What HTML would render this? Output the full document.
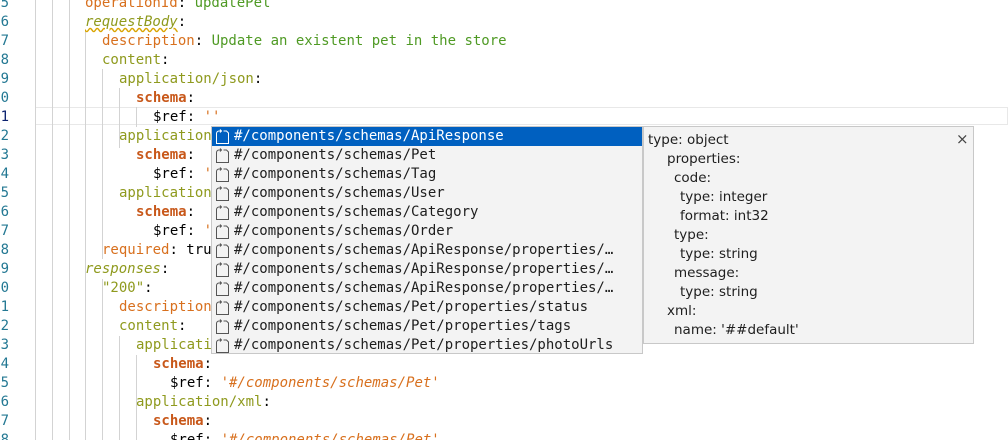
<!DOCTYPE html>
<html><head><style>
html,body{margin:0;padding:0;width:1008px;height:440px;overflow:hidden;background:#fff;position:relative}
.m{font-family:"DejaVu Sans Mono","Liberation Mono",monospace;font-size:14px}
.ln{position:absolute;left:-3px;width:12px;text-align:right;color:#237893;line-height:19px}
.cl{position:absolute;white-space:pre;line-height:19px}
.g{position:absolute;width:1px;background:#d3d3d3}
.k{color:#8f9a1e}.o{color:#d8701e}.b{color:#c8581a;font-weight:bold}.v{color:#4f9a24}.s{color:#d8701e}.i{font-style:italic}
.pop{position:absolute;left:211px;top:126px;width:432px;height:228px;background:#f3f3f3;border:1px solid #c8c8c8;box-sizing:border-box}
.row{height:19px;line-height:19px;white-space:pre;color:#1e1e1e;position:relative;padding-left:22px}
.row svg{position:absolute;left:2px;top:1px}
.sel{background:#0060c0;color:#fff}
.det{position:absolute;left:643px;top:126px;width:331px;height:218px;background:#f3f3f3;border:1px solid #c8c8c8;box-sizing:border-box;font-family:"DejaVu Sans","Liberation Sans",sans-serif;font-size:13.5px;color:#1e1e1e}
.det div{position:absolute;white-space:pre;line-height:19px}
</style></head><body class="m">
<div style="position:absolute;left:35px;top:107px;width:973px;height:18px;border:1px solid #e8e8e8;box-sizing:border-box"></div>
<div class="g" style="left:35px;top:0;height:440px"></div>
<div class="g" style="left:52px;top:0;height:440px"></div>
<div class="g" style="left:69px;top:0;height:440px"></div>
<div class="g" style="left:85px;top:30px;height:410px"></div>
<div class="g" style="left:102px;top:69px;height:190px"></div>
<div class="g" style="left:119px;top:88px;height:60px"></div>
<div class="g" style="left:136px;top:107px;height:20px"></div>
<div class="g" style="left:102px;top:279px;height:161px"></div>
<div class="g" style="left:119px;top:336px;height:104px"></div>
<div class="g" style="left:136px;top:355px;height:85px"></div>
<div style="position:absolute;left:0;top:2px;width:1008px;height:440px">
<div class="cl" style="left:85px;top:-8px"><span class="o">operationId</span>: <span class="v">updatePel</span></div>
<div class="cl" style="left:85px;top:11px"><span class="k i" style="text-decoration:underline wavy #d9a400">requestBody</span>:</div>
<div class="cl" style="left:102px;top:30px"><span class="o">description</span>: <span class="v">Update an existent pet in the store</span></div>
<div class="cl" style="left:102px;top:49px"><span class="k">content</span>:</div>
<div class="cl" style="left:119px;top:68px"><span class="k">application/json</span>:</div>
<div class="cl" style="left:136px;top:87px"><span class="b">schema</span>:</div>
<div class="cl" style="left:153px;top:106px">$ref: <span class="s">''</span></div>
<div class="cl" style="left:119px;top:125px"><span class="k">application/xml</span>:</div>
<div class="cl" style="left:136px;top:144px"><span class="b">schema</span>:</div>
<div class="cl" style="left:153px;top:163px">$ref: <span class="s">'</span></div>
<div class="cl" style="left:119px;top:182px"><span class="k">application/x-www</span>:</div>
<div class="cl" style="left:136px;top:201px"><span class="b">schema</span>:</div>
<div class="cl" style="left:153px;top:220px">$ref: <span class="s">'</span></div>
<div class="cl" style="left:102px;top:239px"><span class="o">required</span>: true</div>
<div class="cl" style="left:85px;top:258px"><span class="k i">responses</span>:</div>
<div class="cl" style="left:102px;top:277px"><span class="k">"200"</span>:</div>
<div class="cl" style="left:119px;top:296px"><span class="o">description</span>:</div>
<div class="cl" style="left:119px;top:315px"><span class="k">content</span>:</div>
<div class="cl" style="left:136px;top:334px"><span class="k">application/json</span>:</div>
<div class="cl" style="left:153px;top:353px"><span class="b">schema</span>:</div>
<div class="cl" style="left:170px;top:372px">$ref: <span class="s i">'#/components/schemas/Pet'</span></div>
<div class="cl" style="left:136px;top:391px"><span class="k">application/xml</span>:</div>
<div class="cl" style="left:153px;top:410px"><span class="b">schema</span>:</div>
<div class="cl" style="left:170px;top:429px">$ref: <span class="s i">'#/components/schemas/Pet'</span></div>
<div class="ln" style="top:-8px">5<br>6<br>7<br>8<br>9<br>0<br><span style="color:#0b216f">1</span><br>2<br>3<br>4<br>5<br>6<br>7<br>8<br>9<br>0<br>1<br>2<br>3<br>4<br>5<br>6<br>7<br>8</div>
</div>

<div class="pop" id="pop"></div>
<script>
var items=["ApiResponse","Pet","Tag","User","Category","Order","ApiResponse/properties/…","ApiResponse/properties/…","ApiResponse/properties/…","Pet/properties/status","Pet/properties/tags","Pet/properties/photoUrls"];
var h="";
items.forEach(function(t,i){var c=i==0?"#fff":"#555";
h+='<div class="row'+(i==0?' sel':'')+'"><svg width="17" height="17" viewBox="0 0 17 17" fill="none" stroke="'+c+'" stroke-width="1"><path d="M2.5 7.5v8h12v-10.5l-2-2h-3"/><path d="M2.5 7.5v-2a2.5 2.5 0 0 1 2.5-2.5h2.5"/><path d="M6 1.5l1.5 1.5-1.5 1.5"/></svg>#/components/schemas/'+t+'</div>';});
document.getElementById("pop").innerHTML=h;
</script>

<div class="det">
<div style="left:4px;top:4px">type: object</div>
<div style="left:312px;top:3px;color:#444;font-size:15px">×</div>
<div style="left:23px;top:23px">properties:</div>
<div style="left:30px;top:42px">code:</div>
<div style="left:36px;top:61px">type: integer</div>
<div style="left:36px;top:80px">format: int32</div>
<div style="left:30px;top:99px">type:</div>
<div style="left:36px;top:118px">type: string</div>
<div style="left:30px;top:137px">message:</div>
<div style="left:36px;top:156px">type: string</div>
<div style="left:23px;top:175px">xml:</div>
<div style="left:30px;top:194px">name: '##default'</div>
</div>
</body></html>
